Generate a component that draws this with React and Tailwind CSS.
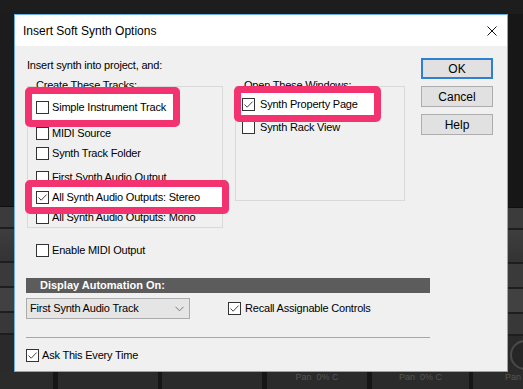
import React from 'react';

const UI = "font-['Liberation_Sans',Arial,sans-serif]";

function Box({ checked }) {
  return (
    <span className="w-[13px] h-[13px] border border-[#333333] bg-white flex items-center justify-center shrink-0">
      {checked && (
        <svg width="11" height="11" viewBox="0 0 11 11">
          <path d="M1.5 5.5 L4.2 8.2 L9.6 2.6" fill="none" stroke="#444444" strokeWidth="1" />
        </svg>
      )}
    </span>
  );
}

function Check({ label, checked, gap = 'ml-[3px]', className = '' }) {
  return (
    <div className={`flex items-center h-[16px] ${className}`}>
      <Box checked={checked} />
      <span className={`${gap} text-[11px] leading-[13px] tracking-[-0.2px] text-black whitespace-nowrap`}>{label}</span>
    </div>
  );
}

// pink annotation frame drawn over the row
function Mark({ className, children }) {
  return (
    <div className={`relative z-10 bg-white flex items-center ${className}`}>
      {children}
      <div className="absolute -inset-[7px] border-[7px] border-[#f2336f] rounded-[5px] pointer-events-none" />
    </div>
  );
}

function Group({ label, className, children }) {
  return (
    <div className={`relative border border-[#d9d9d9] flex flex-col ${className}`}>
      <span className="absolute -top-[8px] left-[8px] bg-[#f0f0f0] text-[11px] leading-[13px] tracking-[-0.2px] text-black whitespace-nowrap">
        {label}
      </span>
      {children}
    </div>
  );
}

function Btn({ children, primary }) {
  return (
    <div
      className={`w-[72px] h-[21px] flex items-center justify-center bg-[#e1e1e1] text-[12px] text-black ${
        primary ? 'border-2 border-[#2f80d2]' : 'border border-[#adadad]'
      }`}
    >
      {children}
    </div>
  );
}

function SideStrip({ top, knob }) {
  return (
    <div className="flex flex-col w-full h-full overflow-hidden">
      <div className={`${top} shrink-0`} />
      <div className="h-[1px] bg-[#0f0f0f]" />
      <div className="h-[20px] bg-[#3b3b3b]" />
      <div className="h-[2px] bg-[#1e1e1e]" />
      <div className="h-[32px] bg-gradient-to-b from-[#3e3e3e] to-[#333333]" />
      <div className="h-[2px] bg-[#1e1e1e]" />
      <div className="h-[23px] bg-[#3a3a3a]" />
      <div className="h-[2px] bg-[#1e1e1e]" />
      <div className="h-[23px] bg-[#414141]" />
      <div className="h-[2px] bg-[#1e1e1e]" />
      <div className="h-[20px] bg-[#383838]" />
      <div className="h-[2px] bg-[#1e1e1e]" />
      <div className="flex-1 bg-[#2a2a2a] relative">
        {knob && (
          <div className="absolute top-[4px] left-[2px] w-[30px] h-[30px] rounded-full bg-[#262626] border-2 border-[#4a4a4a]" />
        )}
      </div>
    </div>
  );
}

function Dialog() {
  return (
    <div className={`w-[494px] h-[358px] border border-[#6aaee6] bg-[#f0f0f0] flex flex-col ${UI}`}>
      {/* title bar */}
      <div className="h-[31px] bg-white flex items-center pl-[8px] pr-[10px] shrink-0">
        <span className="text-[12px] text-black">Insert Soft Synth Options</span>
        <svg className="ml-auto" width="10" height="10" viewBox="0 0 10 10">
          <path d="M0.5 0.5 L9.5 9.5 M9.5 0.5 L0.5 9.5" stroke="#111" strokeWidth="1" />
        </svg>
      </div>

      <div className="flex-1 flex flex-col pl-[11px]">
        <div className="flex">
          <div className="w-[395px] flex flex-col">
            <span className="mt-[13px] pl-[1px] text-[11px] leading-[13px] tracking-[-0.2px] text-black">
              Insert synth into project, and:
            </span>

            <div className="flex mt-[14px] items-start">
              <Group label="Create These Tracks:" className="ml-[1px] w-[196px] h-[142px]">
                <Mark className="mt-[7px] ml-[4px] w-[141px] h-[26px] pl-[4px]">
                  <Check label="Simple Instrument Track" />
                </Mark>
                <Check label="MIDI Source" className="mt-[5px] ml-[8px]" />
                <Check label="Synth Track Folder" className="mt-[4px] ml-[8px]" />
                <Check label="First Synth Audio Output" className="mt-[8px] ml-[8px]" />
                <Mark className="mt-[2px] ml-[4px] w-[190px] h-[20px] pl-[4px]">
                  <Check label="All Synth Audio Outputs: Stereo" checked />
                </Mark>
                <Check label="All Synth Audio Outputs: Mono" className="mt-[2px] ml-[8px]" />
              </Group>

              <Group label="Open These Windows:" className="ml-[12px] w-[170px] h-[115px]">
                <Mark className="mt-[6px] ml-[5px] w-[133px] h-[22px] pl-[1px]">
                  <Check label="Synth Property Page" checked gap="ml-[5px]" />
                </Mark>
                <Check label="Synth Rack View" className="mt-[4px] ml-[6px]" gap="ml-[5px]" />
              </Group>
            </div>

            <Check label="Enable MIDI Output" className="mt-[14px] ml-[10px]" />
          </div>

          <div className="w-[72px] mt-[12px] flex flex-col gap-[7px]">
            <Btn primary>OK</Btn>
            <Btn>Cancel</Btn>
            <Btn>Help</Btn>
          </div>
        </div>

        {/* automation */}
        <div className="mt-[20px] w-[404px] h-[15px] bg-[#5c5c5c] flex items-center pl-[14px]">
          <span className="text-[11px] font-bold text-white leading-[13px]">Display Automation On:</span>
        </div>

        <div className="flex items-center mt-[5px]">
          <div className="w-[164px] h-[21px] border border-[#acacac] bg-[#e5e5e5] flex items-center pl-[3px] pr-[5px]">
            <span className="text-[11px] tracking-[-0.2px] text-black">First Synth Audio Track</span>
            <svg className="ml-auto" width="9" height="6" viewBox="0 0 9 6">
              <path d="M0.5 0.8 L4.5 4.8 L8.5 0.8" fill="none" stroke="#777" strokeWidth="1" />
            </svg>
          </div>
          <Check label="Recall Assignable Controls" checked gap="ml-[4px]" className="ml-[38px]" />
        </div>

        <div className="mt-[18px] w-[404px] h-[1px] bg-[#a8a8a8]" />

        <Check label="Ask This Every Time" checked className="mt-[9px]" />
      </div>
    </div>
  );
}

function BottomStrip() {
  const line = 'bg-[#161616] shrink-0';
  const cell = 'bg-[#2b2b2b] flex justify-center';
  const pan = "text-[9px] leading-[11px] text-[#555555] font-['Liberation_Sans',Arial,sans-serif] whitespace-nowrap";
  return (
    <div className="h-[17px] flex">
      <div className={`${cell} w-[53px]`} />
      <div className={`${line} w-[5px]`} />
      <div className={`${cell} w-[100px]`} />
      <div className={`${line} w-[4px]`} />
      <div className={`${cell} w-[100px]`} />
      <div className={`${line} w-[5px]`} />
      <div className={`${cell} w-[100px]`}>
        <span className={pan}>Pan&nbsp;&nbsp;0% C</span>
      </div>
      <div className={`${line} w-[5px]`} />
      <div className={`${cell} w-[97px]`}>
        <span className={pan}>Pan&nbsp;&nbsp;0% C</span>
      </div>
      <div className={`${line} w-[4px]`} />
      <div className={`${cell} flex-1 justify-end pr-[2px]`}>
        <span className={pan}>Pan</span>
      </div>
    </div>
  );
}

export default function App() {
  return (
    <div className="w-[523px] h-[389px] bg-[#1c1c1c] flex flex-col overflow-hidden">
      <div className="h-[14px] shrink-0 bg-[#1d1d1d]" />
      <div className="flex h-[358px] shrink-0">
        <div className="w-[14px] shrink-0">
          <SideStrip top="h-[192px] bg-[#1c1c1c]" />
        </div>
        <Dialog />
        <div className="w-[15px] shrink-0">
          <SideStrip top="h-[193px] bg-[#171717]" knob />
        </div>
      </div>
      <BottomStrip />
    </div>
  );
}
